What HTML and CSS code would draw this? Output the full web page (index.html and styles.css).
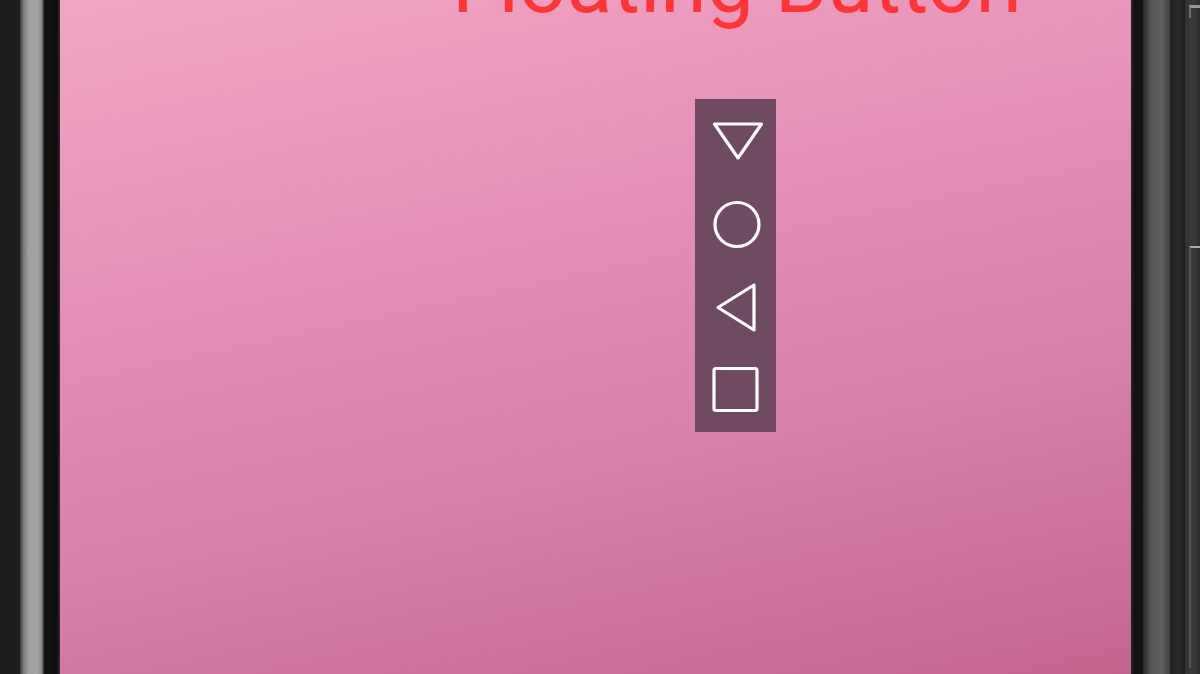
FILE: index.html
```html
<!DOCTYPE html>
<html>
<head>
<meta charset="utf-8">
<link rel="stylesheet" href="styles.css">
</head>
<body>
<div class="device">
  <div class="bezel-left">
    <div class="bl-outer"></div>
    <div class="bl-shine"></div>
    <div class="bl-inner"></div>
  </div>
  <div class="screen">
    <div class="title">Floating Button</div>
    <div class="float-panel">
      <svg class="ico" width="80" height="83" viewBox="0 0 80 83">
        <polygon points="18.5,23 65.5,23 42,57" fill="none" stroke="#fff" stroke-width="3.2" stroke-linejoin="round"/>
      </svg>
      <svg class="ico" width="80" height="83" viewBox="0 0 80 83">
        <circle cx="41" cy="40.5" r="22" fill="none" stroke="#fff" stroke-width="3.2"/>
      </svg>
      <svg class="ico" width="80" height="83" viewBox="0 0 80 83">
        <polygon points="22,40.5 58,18 58,63" fill="none" stroke="#fff" stroke-width="3.2" stroke-linejoin="round"/>
      </svg>
      <svg class="ico" width="80" height="83" viewBox="0 0 80 83">
        <rect x="18" y="18.5" width="43" height="42" rx="2" fill="none" stroke="#fff" stroke-width="3.2"/>
      </svg>
    </div>
  </div>
  <div class="bezel-right">
    <div class="br-black"></div>
    <div class="br-gray"></div>
    <div class="br-dark"></div>
    <div class="br-edge">
      <div class="btn-top"></div>
      <div class="btn-mid"></div>
    </div>
  </div>
</div>
</body>
</html>
```

FILE: styles.css
```css
html, body {
  margin: 0;
  padding: 0;
  width: 1200px;
  height: 674px;
  overflow: hidden;
  background: #1e1e1e;
}
.device {
  display: flex;
  width: 1200px;
  height: 674px;
}
.bezel-left {
  display: flex;
  width: 60px;
  flex: none;
}
.bl-outer {
  width: 20px;
  background: #1d1d1d;
}
.bl-shine {
  width: 24px;
  background: linear-gradient(to right, #3a3a3a 0%, #7a7a7a 15%, #9c9c9c 35%, #a4a4a4 70%, #8a8a8a 90%, #2a2a2a 100%);
}
.bl-inner {
  width: 16px;
  background: linear-gradient(to right, #141414 0%, #0e0e0e 80%, #3a2a30 100%);
}
.screen {
  position: relative;
  width: 1071px;
  flex: none;
  overflow: hidden;
  background: linear-gradient(168deg, #f3a5c3 0%, #e58fb8 35%, #d680aa 65%, #c3648f 100%);
}
.title {
  margin-top: -65px;
  padding-left: 392px;
  font-family: Roboto, "Liberation Sans", sans-serif;
  font-size: 84px;
  line-height: 98px;
  color: #ff3434;
  white-space: nowrap;
}
.float-panel {
  position: absolute;
  left: 635px;
  top: 99px;
  width: 81px;
  height: 333px;
  background: #704a62;
  display: flex;
  flex-direction: column;
  align-items: center;
  padding-top: 2px;
  box-sizing: border-box;
}
.ico {
  display: block;
  width: 80px;
  height: 83px;
  flex: none;
}
.bezel-right {
  display: flex;
  flex: 1;
}
.br-black {
  width: 12px;
  background: linear-gradient(to right, #262626 0%, #111 30%, #141414 100%);
}
.br-gray {
  width: 27px;
  background: linear-gradient(to right, #2a2a2a 0%, #565656 30%, #5e5e5e 70%, #3e3e3e 100%);
}
.br-dark {
  width: 15px;
  background: linear-gradient(to right, #222 0%, #2b2b2b 60%, #1d1d1d 100%);
}
.br-edge {
  flex: 1;
  background: linear-gradient(to right, #333 0%, #3a3a3a 60%, #2a2a2a 100%);
  display: flex;
  flex-direction: column;
}
.btn-top {
  height: 10px;
  margin-left: 4px;
  border-top: 3px solid #9a9a9a;
  border-left: 2px solid #707070;
  margin-top: 5px;
}
.btn-mid {
  height: 420px;
  margin-top: 228px;
  margin-left: 4px;
  border-top: 2px solid #aaa;
  border-left: 2px solid #555;
}
```
